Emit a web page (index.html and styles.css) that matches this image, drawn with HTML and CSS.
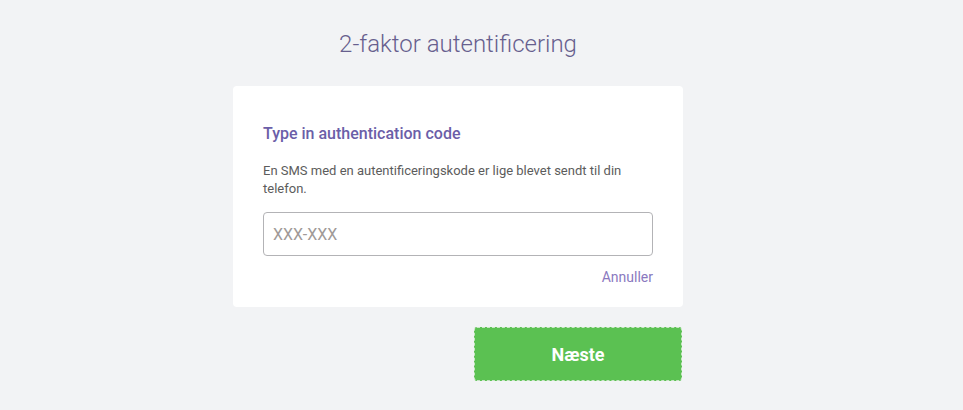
FILE: index.html
```html
<!DOCTYPE html>
<html lang="da">
<head>
<meta charset="utf-8">
<title>2-faktor autentificering</title>
<link rel="stylesheet" href="styles.css">
</head>
<body>
<main class="page">
  <h1 class="title">2-faktor autentificering</h1>
  <section class="card">
    <h2 class="card-heading">Type in authentication code</h2>
    <p class="card-text">En SMS med en autentificeringskode er lige blevet sendt til din telefon.</p>
    <input class="code-input" type="text" placeholder="XXX-XXX">
    <div class="cancel-row"><a class="cancel" href="#">Annuller</a></div>
  </section>
  <div class="actions">
    <button class="next" type="button">Næste</button>
  </div>
</main>
</body>
</html>
```

FILE: styles.css
```css
html, body {
  margin: 0;
  padding: 0;
  background: #f2f3f5;
  font-family: Roboto, "Liberation Sans", sans-serif;
}

.page {
  width: 450px;
  margin-left: 233px;
  padding-top: 30px;
}

.title {
  margin: 0 0 28px;
  text-align: center;
  font-size: 24px;
  line-height: 28px;
  font-weight: 300;
  color: #675f8e;
}

.card {
  background: #fff;
  border-radius: 4px;
  padding: 38px 30px 20px;
}

.card-heading {
  margin: 0;
  font-size: 16px;
  line-height: 20px;
  font-weight: 500;
  color: #6b5ea8;
}

.card-text {
  margin: 18px 0 14px;
  font-size: 13px;
  line-height: 18px;
  color: #5c5c5c;
}

.code-input {
  display: block;
  box-sizing: border-box;
  width: 100%;
  height: 44px;
  margin: 0;
  padding: 0 9px;
  border: 1px solid #b3b3b6;
  border-radius: 4px;
  font-family: inherit;
  font-size: 16px;
  color: #333;
  background: #fff;
  outline: none;
}

.code-input::placeholder {
  color: #a09a98;
}

.cancel-row {
  margin-top: 11px;
  text-align: right;
  line-height: 20px;
}

.cancel {
  font-size: 14px;
  color: #8a79c0;
  text-decoration: none;
}

.actions {
  display: flex;
  justify-content: flex-end;
  margin-top: 20px;
  padding-right: 1px;
}

.next {
  width: 208px;
  height: 54px;
  border: 1px dashed #c9e6c5;
  border-radius: 3px;
  background: #5bc152;
  color: #fff;
  font-family: inherit;
  font-size: 18px;
  font-weight: 700;
  cursor: pointer;
}
```
